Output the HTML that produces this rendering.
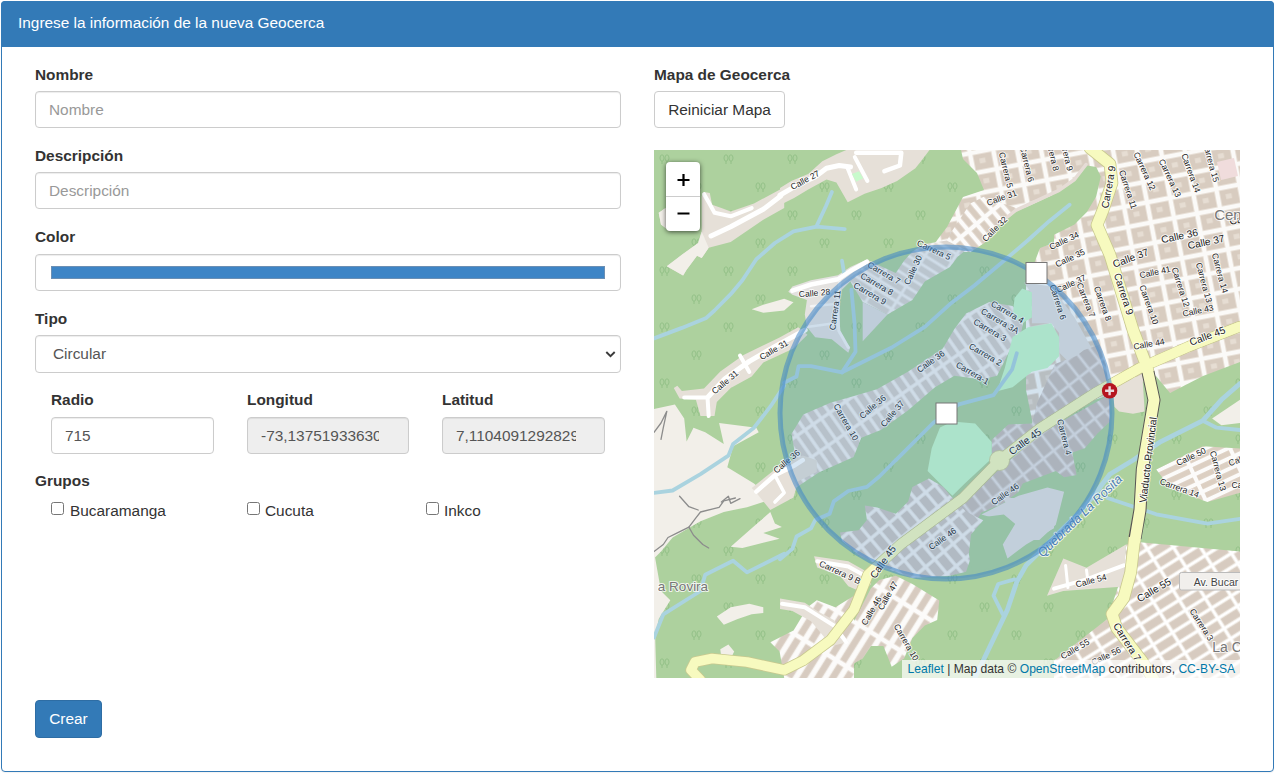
<!DOCTYPE html>
<html><head><meta charset="utf-8">
<style>
*{box-sizing:border-box;margin:0;padding:0}
html,body{width:1276px;height:774px;background:#fff;overflow:hidden}
body{font-family:"Liberation Sans",sans-serif;font-size:15.4px;color:#333;position:relative}
.panel{position:absolute;left:1px;top:1px;width:1273px;height:771px;border:1px solid #337ab7;border-radius:4px;background:#fff;box-shadow:0 1px 1px rgba(0,0,0,.05)}
.head{position:absolute;left:1px;top:1px;width:1273px;height:45.5px;background:#337ab7;border-radius:4px 4px 0 0}
.head span{position:absolute;left:17px;top:11px;line-height:22px;color:#fff;font-size:15.4px;white-space:nowrap}
.lb{position:absolute;font-weight:bold;line-height:22px;white-space:nowrap;color:#333}
.in{position:absolute;height:37px;border:1px solid #ccc;border-radius:4px;background:#fff;box-shadow:inset 0 1px 1px rgba(0,0,0,.075);color:#555;line-height:35px;padding-left:13px;white-space:nowrap;overflow:hidden}
.ph{color:#999}
.dis{background:#eee}
.cb{position:absolute;width:13px;height:13px;border:1px solid #767676;border-radius:2.5px;background:#fff}
.ct{position:absolute;line-height:22px;white-space:nowrap;color:#333}
.btn{position:absolute;border-radius:4px;line-height:22px;text-align:center;white-space:nowrap}
</style></head><body>
<div class="panel"></div>
<div class="head"><span>Ingrese la información de la nueva Geocerca</span></div>

<div class="lb" style="left:35px;top:64px">Nombre</div>
<div class="in ph" style="left:35px;top:91px;width:586px">Nombre</div>
<div class="lb" style="left:35px;top:145px">Descripción</div>
<div class="in ph" style="left:35px;top:172px;width:586px">Descripción</div>
<div class="lb" style="left:35px;top:226px">Color</div>
<div class="in" style="left:35px;top:254px;width:586px"><div style="position:absolute;left:15px;top:11px;width:554px;height:13px;background:#3e85c6;border:1px solid #6b8fb4"></div></div>
<div class="lb" style="left:35px;top:308px">Tipo</div>
<div class="in" style="left:35px;top:335px;width:586px;height:38px;padding-left:17px">Circular
<svg style="position:absolute;right:4.5px;top:14px" width="11" height="9" viewBox="0 0 11 9"><path d="M1.3 2 L5.5 6.2 L9.7 2" fill="none" stroke="#3a3a3a" stroke-width="1.9"/></svg></div>

<div class="lb" style="left:51px;top:389px">Radio</div>
<div class="lb" style="left:247px;top:389px">Longitud</div>
<div class="lb" style="left:442px;top:389px">Latitud</div>
<div class="in" style="left:51px;top:417px;width:163px">715</div>
<div class="in dis" style="left:247px;top:417px;width:162px"><div style="width:118px;overflow:hidden">-73,13751933630</div></div>
<div class="in dis" style="left:442px;top:417px;width:163px"><div style="width:120px;overflow:hidden">7,1104091292829</div></div>

<div class="lb" style="left:35px;top:470px">Grupos</div>
<div class="cb" style="left:51px;top:502px"></div><div class="ct" style="left:70px;top:500px">Bucaramanga</div>
<div class="cb" style="left:247px;top:502px"></div><div class="ct" style="left:265px;top:500px">Cucuta</div>
<div class="cb" style="left:426px;top:502px"></div><div class="ct" style="left:444px;top:500px">Inkco</div>

<div class="btn" style="left:35px;top:700px;width:67px;height:38px;background:#337ab7;border:1px solid #2e6da4;color:#fff;padding-top:7px">Crear</div>

<div class="lb" style="left:654px;top:64px">Mapa de Geocerca</div>
<div class="btn" style="left:654px;top:91px;width:131px;height:37px;background:#fff;border:1px solid #ccc;color:#333;padding-top:7px">Reiniciar Mapa</div>

<div id="map" style="position:absolute;left:654px;top:150px;width:586px;height:528px;background:#add19e;overflow:hidden">
<svg width="586" height="528" viewBox="0 0 586 528" style="position:absolute;left:0;top:0">
<defs>
<pattern id="gridA" width="23.5" height="20.5" patternUnits="userSpaceOnUse" patternTransform="rotate(-11) translate(4,2)"><rect width="23.5" height="20.5" fill="#fbfaf8"/><rect x="2" y="2" width="19.5" height="16.5" fill="#ebe3da"/><rect x="2.8" y="2.8" width="17.9" height="14.9" fill="#d8ccc0"/><rect x="8" y="7" width="6" height="5" fill="#e6ddd3"/></pattern>
<pattern id="gridB" width="10" height="26" patternUnits="userSpaceOnUse" patternTransform="rotate(-35) translate(3,4)"><rect width="10" height="26" fill="#f4f2f0"/><rect x="1.7" y="1.7" width="6.6" height="22.6" fill="#d6d0cb"/></pattern>
<pattern id="gridD" width="26" height="9" patternUnits="userSpaceOnUse" patternTransform="rotate(32)"><rect width="26" height="9" fill="#f4f2f0"/><rect x="1.5" y="1.5" width="23" height="6" fill="#dad5d0"/></pattern>
<pattern id="trees" width="64" height="56" patternUnits="userSpaceOnUse"><g fill="none" stroke="#93c087" stroke-width="1"><path d="M8 14v-3M13 14v-3"/><ellipse cx="8" cy="8" rx="2" ry="3.2"/><ellipse cx="13" cy="8" rx="2" ry="3.2"/><path d="M40 42v-3M45 42v-3"/><ellipse cx="40" cy="36" rx="2" ry="3.2"/><ellipse cx="45" cy="36" rx="2" ry="3.2"/></g></pattern>
<pattern id="gridC" width="12.5" height="42" patternUnits="userSpaceOnUse" patternTransform="rotate(32)"><rect width="12.5" height="42" fill="#fcfbfa"/><rect x="2.6" y="2.2" width="7.3" height="37.6" fill="#e6ddd3"/><rect x="3.3" y="2.9" width="5.9" height="36.2" fill="#d7cbc0"/></pattern>
<pattern id="gridI" width="13" height="21" patternUnits="userSpaceOnUse" patternTransform="rotate(-38)"><rect width="13" height="21" fill="#e6e2e2"/><rect x="1.4" y="1.4" width="10.2" height="18.2" fill="#c9bfba"/></pattern>
<pattern id="gridE" width="44" height="9.5" patternUnits="userSpaceOnUse" patternTransform="rotate(-25)"><rect width="44" height="9.5" fill="#fcfbfa"/><rect x="2" y="2" width="40" height="5.5" fill="#dccfc2"/></pattern>
<pattern id="gridF" width="23" height="12" patternUnits="userSpaceOnUse" patternTransform="rotate(-32)"><rect width="23" height="12" fill="#fff"/><rect x="1.5" y="1.5" width="20" height="9" fill="#e6ddd3"/><rect x="2.3" y="2.3" width="18.4" height="7.4" fill="#d7cbc0"/></pattern>
<pattern id="gridG" width="12" height="19" patternUnits="userSpaceOnUse" patternTransform="rotate(-40)"><rect width="12" height="19" fill="#f4f2f0"/><rect x="1.7" y="1.7" width="8.6" height="15.6" fill="#cfc7c2"/></pattern>
<pattern id="gridH" width="10.5" height="24" patternUnits="userSpaceOnUse" patternTransform="rotate(-40)"><rect width="10.5" height="24" fill="#fcfbfa"/><rect x="2" y="2" width="6.5" height="20" fill="#e6ddd3"/><rect x="2.7" y="2.7" width="5.1" height="18.6" fill="#d8ccc0"/></pattern>
</defs>
<rect width="586" height="528" fill="#add19e"/>
<rect width="586" height="528" fill="url(#trees)"/>
<polygon points="0.0,259.1 20.9,254.4 30.2,268.4 32.6,291.6 39.5,277.7 51.2,282.3 69.8,294.0 65.1,273.0 102.3,277.7 104.7,282.3 79.1,296.3 73.3,317.2 100.0,333.5 116.3,347.4 116.3,349.8 93.0,357.2 69.8,361.9 46.5,371.2 18.6,387.4 7.0,401.4 0.0,408.4" fill="#f2efe9" />
<polygon points="0.0,401.5 7.0,441.0 16.3,450.3 4.7,468.9 1.2,487.5 2.3,528.0 0.0,528.0" fill="#f2efe9" />
<polygon points="76.7,396.8 97.7,378.2 116.3,362.0 120.9,373.6 127.9,377.1 109.3,382.9 125.6,388.7 102.3,394.5 88.4,398.0" fill="#f2efe9" />
<polygon points="62.8,466.6 76.7,457.3 95.3,453.8 109.3,457.3 109.3,463.1 97.7,464.3 83.7,468.9 69.8,474.7" fill="#f2efe9" />
<polygon points="66.3,499.2 74.4,494.5 80.2,501.5 76.7,508.5 67.4,508.5" fill="#f2efe9" />
<polygon points="97.7,159.3 109.3,154.7 130.2,148.8 139.5,152.3 130.2,160.5 109.3,162.8" fill="#f2efe9" />
<polygon points="558.1,268.4 586.0,249.8 586.0,273.0 567.4,275.3" fill="#f2efe9" />
<polygon points="12.8,116.3 29.1,125.6 32.6,119.8 43.0,105.8 47.7,108.1 54.7,97.7 76.7,91.9 109.3,69.8 130.2,58.1 130.2,37.2 100.0,53.5 76.7,61.6 67.4,58.1 58.1,54.7 55.8,43.0 50.0,41.9 47.7,46.5 47.7,81.4 44.2,93.0 27.9,104.7" fill="#e6e0d8" />
<polygon points="4.7,62.8 11.6,58.1 12.8,79.1 7.0,74.4" fill="#e6e0d8" />
<polygon points="12.8,116.3 29.1,125.6 32.6,119.8 43.0,105.8 47.7,108.1 54.7,97.7 47.7,81.4 44.2,93.0 27.9,104.7" fill="#f2efe9" />
<polygon points="4.7,62.8 11.6,58.1 12.8,79.1 7.0,74.4" fill="#f2efe9" />
<polygon points="126.0,38.1 137.3,31.0 154.2,24.0 168.3,11.3 182.4,4.2 192.3,0.0 275.5,0.0 267.0,11.3 261.4,18.3 243.1,31.0 227.6,38.1 210.6,43.7 193.7,52.2 182.4,32.4 172.5,29.6 154.2,39.5 140.1,48.0 126.0,55.0" fill="#e6e0d8" />
<polygon points="307,0 586,0 586,212 549,226 516,243 502,226 470,240 440,250 400,275 380,280 372,240 372,135 386,98 400,93 400,50 377,58 349,77 330,93 316,102 298,102 281,93 293,77 309,47 330,40 323,23 309,9" fill="url(#gridA)" />
<polygon points="563,12 580,8 584,26 567,30" fill="#f0dcdc" />
<polygon points="134.3,141.7 138.4,136.5 157.0,130.3 183.9,125.2 196.3,116.9 212.9,109.6 217.0,112.8 196.3,131.4 186.0,141.7 186.0,185.1 196.3,197.5 194.3,202.7 177.7,189.3 161.2,187.2 152.9,176.9 150.8,164.5 152.9,150.0 138.4,144.8" fill="#e4e2e0" />
<polygon points="196.3,131.4 214.9,110.7 241.8,123.1 250.1,110.7 258.4,101.4 270.8,94.1 296.0,90.0 296.0,81.7 312.1,78.6 313.2,85.9 318.3,93.1 314.2,98.3 303.9,106.5 296.0,116.9 270.8,131.4 258.4,150.0 233.5,164.5 208.7,152.0" fill="url(#gridD)" />
<polygon points="208.7,152.0 233.5,164.5 208.7,191.3" fill="#e0dfdf" />
<polygon points="126.0,322.6 141.5,307.1 137.6,283.8 149.3,264.4 176.4,252.8 203.5,245.0 222.9,239.2 253.9,221.8 288.8,198.5 300.4,179.1 312.0,163.6 335.3,152.0 358.6,155.9 370.2,167.5 366.3,186.9 354.7,202.4 343.1,225.7 327.6,229.5 300.4,225.7 281.0,237.3 253.9,260.5 226.8,279.9 207.4,287.7 199.6,307.1 164.8,322.6 141.5,338.1 126.0,338.1" fill="url(#gridB)" />
<polygon points="370.2,132.6 397.3,136.5 420.6,167.5 440.0,202.4 451.6,233.4 420.6,217.9 405.1,202.4 405.1,183.0 397.3,173.3 377.9,173.3 377.9,144.3" fill="#e4e2e0" />
<polygon points="337.7,308.6 337.7,290 354.3,274.5 378,273.4 383.2,252.8 393.5,230 401,214 422,206 430,200 445,195 452,215 455,241 386,283 346,310" fill="url(#gridI)" />
<polygon points="286,372.7 348,316.9 389.4,281.7 456,244.5 456,271.4 443.2,283.8 430.8,298.3 418.4,302.4 422.5,325.1 410.1,327.2 401.8,321 385.3,327.2 368.7,333.4 364.6,341.7 348,354.1 327.4,362.4 310.8,390 286,390" fill="url(#gridI)" />
<polygon points="364.6,345.8 393.5,337.5 410.1,341.7 406.0,358.2 401.8,374.8 385.3,390.1 354.3,390.1 348.0,370.6 327.4,364.4 348.0,354.1" fill="#e4e2e0" />
<polygon points="186.0,382.4 204.6,380.3 212.9,370.0 210.8,355.5 223.2,357.6 241.8,363.8 254.2,351.4 258.4,336.9 274.9,328.6 289.4,336.9 296.0,345.2 312.1,361.7 332.8,372.0 320.4,396.9 312.1,421.7 296.0,425.8 258.4,427.9 229.4,417.5 204.6,405.1 188.0,390.7" fill="url(#gridG)" />
<polygon points="97.7,338.1 120.9,319.5 139.5,310.2 148.8,305.6 162.8,310.2 162.8,321.9 144.2,331.2 139.5,347.4 116.3,360.0 102.3,342.8" fill="#e6e0d8" />
<polygon points="144.2,177.2 125.6,187.4 89.5,205.1 66.3,221.4 50.0,238.6 27.9,240.9 23.3,235.8 19.8,238.1 25.6,248.6 41.9,249.8 46.5,266.0 60.5,266.0 62.8,252.1 76.7,238.1 97.7,226.5 109.3,212.6 139.5,198.6 153.5,184.7" fill="#e6e0d8" />
<polygon points="160.1,406.2 194.3,411.3 212.9,421.7 217.0,434.1 208.7,442.4 194.3,436.2 186.0,425.8 163.2,417.5" fill="#e6e0d8" />
<polygon points="225.3,430.0 241.8,425.8 258.4,434.1 285.3,450.6 283.2,470.1 270.8,475.5 258.4,487.9 250.1,508.6 237.7,516.8 229.4,496.1 217.0,496.1 208.7,508.6 194.3,516.8 188.0,502.3 200.5,470.1 217.0,438.2" fill="url(#gridC)" />
<polygon points="116.3,492.2 139.5,480.6 153.5,457.3 162.8,450.3 181.4,457.3 200.0,445.7 200.0,528.0 130.2,528.0 125.6,501.5" fill="url(#gridC)" />
<polygon points="126.0,448.6 150.8,452.7 163.2,461.0 179.8,470.1 194.3,492.0 177.7,496.1 157.0,471.3 138.4,461.0 126.0,458.9" fill="#e6e0d8" />
<polygon points="502.3,319.5 516.2,312.6 548.8,296.3 586.0,298.6 586.0,342.8 553.4,352.1 516.2,338.1" fill="url(#gridE)" />
<polygon points="458.1,238.1 488.3,224.2 490.7,261.4 479.0,263.7 465.1,261.4 460.4,256.7" fill="#e6e0d8" />
<polygon points="486.0,392.2 586.0,401.5 586.0,528.0 400.0,528.0 400.0,510.8 432.5,485.2 453.4,468.9 462.7,441.0 469.7,420.1 472.0,394.5" fill="url(#gridF)" />
<polygon points="393.0,445.7 409.3,408.5 432.5,417.8 472.0,394.5 469.7,436.4 409.3,441.0" fill="#e6e0d8" />
<polygon points="317.0,384.4 332.3,366.8 349.9,364.6 363.1,375.6 348.8,393.2 353.2,410.7 319.2,423.9 314.8,404.1" fill="#add19e" />
<polygon points="348.8,348.0 400.0,348.0 400.0,378.2 372.1,394.5 353.5,408.5 348.8,394.5 362.8,371.3" fill="#e4e2e0" />
<polygon points="368.2,138.4 377.9,142.3 377.9,167.5 368.2,173.3 358.6,167.5 360.5,148.1" fill="#c8facc" />
<polygon points="358.6,186.9 374.1,177.2 397.3,173.3 405.1,186.9 405.1,206.3 393.4,217.9 377.9,221.8 358.6,237.3 343.1,241.2 350.8,217.9 354.7,202.4" fill="#c8facc" />
<polygon points="286.0,277.6 298.4,271.4 321.2,273.4 337.7,292.0 337.7,308.6 310.8,333.4 298.4,345.8 286.0,333.4 273.6,321.0 277.7,298.3" fill="#c8facc" />
<polygon points="297.7,81.4 316.3,53.5 330.2,46.5 348.8,53.5 362.8,58.1 348.8,76.7 330.2,93.0 316.3,102.3 302.3,95.3 293.0,90.7" fill="url(#gridH)" />
<polygon points="340,78 346,74.5 361.5,62 381.7,52.7 405,41.9 420.5,31 432.9,15.5 442.2,17 446.8,26.4 442.2,46.5 432.9,62 420.5,74.5 395.6,86.9 384.8,99.3 372.4,111.7 346,120 340,120" fill="#add19e" />
<polyline points="346,73 361.5,60.5 381.7,51.2 405,40.4 420.5,29.5 432,14.5" fill="none" stroke="#e6dcd6" stroke-width="3.5" stroke-linejoin="round" stroke-linecap="round" />
<polyline points="0.0,188.4 27.9,177.9 52.3,167.9 60.5,160.5 76.7,144.2 88.4,130.2 102.3,109.3 120.9,93.0 139.5,81.4 162.8,76.7 190.7,79.1" fill="none" stroke="#aad3df" stroke-width="3.8" stroke-linejoin="round" stroke-linecap="round" />
<polyline points="162.8,75.6 172.1,55.8 177.9,41.9" fill="none" stroke="#aad3df" stroke-width="3.8" stroke-linejoin="round" stroke-linecap="round" />
<polyline points="188.0,110.7 190.1,123.1" fill="none" stroke="#aad3df" stroke-width="3.8" stroke-linejoin="round" stroke-linecap="round" />
<polyline points="197.4,139.6 200.5,172.7 201.5,201.7 188.0,222.4" fill="none" stroke="#aad3df" stroke-width="3.8" stroke-linejoin="round" stroke-linecap="round" />
<polyline points="415.6,54.8 394.9,71.4 374.2,90.0 345.2,114.8 320.4,135.5 296.0,154.1 270.8,176.9 237.7,197.5 208.7,212.0 188.0,222.4 157.0,216.2 144.6,216.2 142.5,226.5 130.1,232.7" fill="none" stroke="#aad3df" stroke-width="3.8" stroke-linejoin="round" stroke-linecap="round" />
<polyline points="130.2,235.8 125.6,242.8 116.3,256.7 100.0,277.7 79.1,294.0 74.4,305.6 46.5,324.2 18.6,340.5 0.0,342.8" fill="none" stroke="#aad3df" stroke-width="3.8" stroke-linejoin="round" stroke-linecap="round" />
<polyline points="362.8,203.3 358.1,219.5 339.5,245.1 304.7,254.4 279.1,273.0 241.9,310.2" fill="none" stroke="#aad3df" stroke-width="3.8" stroke-linejoin="round" stroke-linecap="round" />
<polyline points="241.8,310.0 225.3,326.5 212.9,336.9 194.3,341.0 179.8,351.4 175.6,363.8 161.2,370.0 157.0,378.3 142.5,386.5 138.4,398.9 126.0,409.3" fill="none" stroke="#aad3df" stroke-width="3.8" stroke-linejoin="round" stroke-linecap="round" />
<polyline points="130.2,403.8 93.0,422.4 79.1,410.8 51.2,424.7 46.5,441.0 9.3,464.3 0.0,487.5" fill="none" stroke="#aad3df" stroke-width="3.8" stroke-linejoin="round" stroke-linecap="round" />
<polyline points="586.0,233.5 567.4,249.8 548.8,270.7 506.9,291.6 479.0,310.2 455.8,324.2 441.8,342.8 427.9,360.0" fill="none" stroke="#aad3df" stroke-width="4.8" stroke-linejoin="round" stroke-linecap="round" />
<polyline points="427.9,360.1 409.3,378.2 386.0,401.5 372.1,415.4 362.8,431.7 353.5,459.6 330.2,508.5 320.9,528.0" fill="none" stroke="#aad3df" stroke-width="4.8" stroke-linejoin="round" stroke-linecap="round" />
<polyline points="360.5,429.4 344.2,434.0 339.5,445.7 348.8,464.3" fill="none" stroke="#aad3df" stroke-width="3.8" stroke-linejoin="round" stroke-linecap="round" />
<polyline points="453.4,348.0 502.3,364.3 553.4,373.6 586.0,368.9" fill="none" stroke="#aad3df" stroke-width="3.8" stroke-linejoin="round" stroke-linecap="round" />
<polyline points="548.8,270.7 562.7,277.7 586.0,280.0" fill="none" stroke="#aad3df" stroke-width="3.8" stroke-linejoin="round" stroke-linecap="round" />
<polyline points="57.0,86.0 76.7,76.7 109.3,59.3 126.7,46.0" fill="none" stroke="#fff" stroke-width="5" stroke-linejoin="round" stroke-linecap="round" />
<polyline points="126.0,45.1 142.9,35.3 161.3,26.8 172.5,18.3 185.2,15.5 196.5,16.9" fill="none" stroke="#fff" stroke-width="5" stroke-linejoin="round" stroke-linecap="round" />
<polyline points="193.7,18.3 202.2,39.5" fill="none" stroke="#fff" stroke-width="4" stroke-linejoin="round" stroke-linecap="round" />
<polyline points="200.8,7.1 213.4,31.0" fill="none" stroke="#fff" stroke-width="4" stroke-linejoin="round" stroke-linecap="round" />
<polyline points="202.2,2.8 247.3,2.8 245.9,15.5 230.4,21.2" fill="none" stroke="#fff" stroke-width="4.5" stroke-linejoin="round" stroke-linecap="round" />
<polygon points="197.9,24.0 205.0,21.2 209.2,28.2 202.2,31.7" fill="#c8facc" />
<polyline points="50.0,44.2 54.7,52.3 60.5,62.8 76.7,66.3 97.7,58.1" fill="none" stroke="#fff" stroke-width="4" stroke-linejoin="round" stroke-linecap="round" />
<polyline points="151.2,180.0 123.3,195.1 95.3,211.4 70.9,228.8 54.7,246.3" fill="none" stroke="#fff" stroke-width="5" stroke-linejoin="round" stroke-linecap="round" />
<polyline points="30.2,247.4 53.5,247.4 54.7,266.0" fill="none" stroke="#fff" stroke-width="4" stroke-linejoin="round" stroke-linecap="round" />
<polyline points="86.0,205.6 95.3,221.9" fill="none" stroke="#fff" stroke-width="4" stroke-linejoin="round" stroke-linecap="round" />
<polyline points="138.4,140.7 157.0,134.5 183.9,129.3 196.3,121.0 212.9,111.7" fill="none" stroke="#fff" stroke-width="4.5" stroke-linejoin="round" stroke-linecap="round" />
<polyline points="186.0,131.4 182.9,158.3 184.9,181.0 194.3,197.5" fill="none" stroke="#f4f4f4" stroke-width="3" stroke-linejoin="round" stroke-linecap="round" />
<polyline points="157.0,156.2 181.8,154.1" fill="none" stroke="#f4f4f4" stroke-width="2.5" stroke-linejoin="round" stroke-linecap="round" />
<polyline points="152.9,176.9 183.9,172.7" fill="none" stroke="#f4f4f4" stroke-width="2.5" stroke-linejoin="round" stroke-linecap="round" />
<polyline points="102.3,341.6 120.9,325.3 139.5,316.0 148.8,310.2" fill="none" stroke="#fff" stroke-width="4.5" stroke-linejoin="round" stroke-linecap="round" />
<polyline points="120.9,325.3 130.2,342.8 120.9,352.1" fill="none" stroke="#fff" stroke-width="3.5" stroke-linejoin="round" stroke-linecap="round" />
<polyline points="163.2,411.3 194.3,416.5 214.9,427.9" fill="none" stroke="#fff" stroke-width="4" stroke-linejoin="round" stroke-linecap="round" />
<polyline points="128.1,453.7 150.8,457.3 163.2,465.1 179.8,475.5 192.2,492.0" fill="none" stroke="#fff" stroke-width="4" stroke-linejoin="round" stroke-linecap="round" />
<polyline points="400.0,438.7 432.5,429.4 469.7,415.4" fill="none" stroke="#fff" stroke-width="4" stroke-linejoin="round" stroke-linecap="round" />
<polyline points="411.6,415.4 413.9,437.5" fill="none" stroke="#fff" stroke-width="3" stroke-linejoin="round" stroke-linecap="round" />
<polyline points="432.5,420.1 433.7,429.4" fill="none" stroke="#fff" stroke-width="3" stroke-linejoin="round" stroke-linecap="round" />
<polyline points="586,176.5 534.8,196.5 486,218 441.8,242.8 386,278.5 345.5,310.5 309,348 246.5,394.5 214,424.7 200,459.6 176.7,489.9 148.8,510.8 130.2,520 93,512 58,508.5 41,512 37,520 46.5,530" fill="none" stroke="#c9c98f" stroke-width="11.2" stroke-linejoin="round" stroke-linecap="round" />
<polyline points="586,176.5 534.8,196.5 486,218 441.8,242.8 386,278.5 345.5,310.5 309,348 246.5,394.5 214,424.7 200,459.6 176.7,489.9 148.8,510.8 130.2,520 93,512 58,508.5 41,512 37,520 46.5,530" fill="none" stroke="#f7fabf" stroke-width="9.6" stroke-linejoin="round" stroke-linecap="round" />
<circle cx="345.5" cy="310.5" r="10" fill="#f7fabf" stroke="#c9c98f" stroke-width="0.8"/>
<polyline points="441.8,242.8 386,278.5 345.5,310.5 309,348 246.5,394.5 214,424.7" fill="none" stroke="#f7fabf" stroke-width="9.4" stroke-linejoin="round" stroke-linecap="round" />
<polyline points="436,-2 456,14 458,33 449,60 443,75 456,105 479,180 493,217 500,250 488.3,319.5 486,360 481,385 476.7,422.4 469.7,448 458,464 462.7,478 488,511 500,530" fill="none" stroke="#c9c98f" stroke-width="12.6" stroke-linejoin="round" stroke-linecap="round" />
<polyline points="436,-2 456,14 458,33 449,60 443,75 456,105 479,180 493,217 500,250 488.3,319.5 486,360 481,385 476.7,422.4 469.7,448 458,464 462.7,478 488,511 500,530" fill="none" stroke="#f7fabf" stroke-width="11" stroke-linejoin="round" stroke-linecap="round" />
<polyline points="494,222 500,250 488.3,319.5 486,360 481,388" fill="none" stroke="#555" stroke-width="13" stroke-linejoin="round"/>
<polyline points="494,222 500,250 488.3,319.5 486,360 481,390" fill="none" stroke="#f7fabf" stroke-width="11" stroke-linejoin="round" stroke-linecap="round" />
<polyline points="586,176.5 534.8,196.5 486,218 441.8,242.8" fill="none" stroke="#f7fabf" stroke-width="9.4" stroke-linejoin="round" stroke-linecap="round" />
<polyline points="0.0,401.5 9.3,394.5 14.0,387.5 23.3,382.9 34.9,377.1 41.9,367.8 46.5,362.0 65.1,357.3 69.8,350.8 81.4,348.0" fill="none" stroke="#8c8c8c" stroke-width="1.3" stroke-linejoin="round" stroke-linecap="round" />
<polyline points="34.9,377.1 39.5,385.2 48.8,394.5 54.7,398.0" fill="none" stroke="#8c8c8c" stroke-width="1.3" stroke-linejoin="round" stroke-linecap="round" />
<polyline points="0.0,282.3 7.0,273.0 12.8,261.4 9.3,277.7 7.0,289.3" fill="none" stroke="#8c8c8c" stroke-width="1.3" stroke-linejoin="round" stroke-linecap="round" />
<polyline points="25.6,346.3 34.9,356.7 44.2,360.0" fill="none" stroke="#8c8c8c" stroke-width="1.3" stroke-linejoin="round" stroke-linecap="round" />
<polyline points="67.4,352.1 74.4,346.3 76.7,353.3 86.0,348.6" fill="none" stroke="#8c8c8c" stroke-width="1.3" stroke-linejoin="round" stroke-linecap="round" />
<text x="151" y="30" transform="rotate(-28 151 30)" font-size="8.6" fill="#222" text-anchor="middle" dominant-baseline="central" stroke="#fff" stroke-width="2" stroke-opacity="0.8" paint-order="stroke" stroke-linejoin="round" >Calle 27</text>
<text x="160.5" y="143" transform="rotate(-5 160.5 143)" font-size="8.6" fill="#222" text-anchor="middle" dominant-baseline="central" stroke="#fff" stroke-width="2" stroke-opacity="0.8" paint-order="stroke" stroke-linejoin="round" >Calle 28</text>
<text x="181" y="160" transform="rotate(-82 181 160)" font-size="8.6" fill="#222" text-anchor="middle" dominant-baseline="central" stroke="#fff" stroke-width="2" stroke-opacity="0.8" paint-order="stroke" stroke-linejoin="round" >Carrera 11</text>
<text x="347.7" y="47.7" transform="rotate(-20 347.7 47.7)" font-size="8.6" fill="#222" text-anchor="middle" dominant-baseline="central" stroke="#fff" stroke-width="2" stroke-opacity="0.8" paint-order="stroke" stroke-linejoin="round" >Calle 31</text>
<text x="340.7" y="79" transform="rotate(-45 340.7 79)" font-size="8.6" fill="#222" text-anchor="middle" dominant-baseline="central" stroke="#fff" stroke-width="2" stroke-opacity="0.8" paint-order="stroke" stroke-linejoin="round" >Calle 32</text>
<text x="352" y="20" transform="rotate(76 352 20)" font-size="8.6" fill="#222" text-anchor="middle" dominant-baseline="central" stroke="#fff" stroke-width="2" stroke-opacity="0.8" paint-order="stroke" stroke-linejoin="round" >Carrera 5</text>
<text x="373" y="14" transform="rotate(76 373 14)" font-size="8.6" fill="#222" text-anchor="middle" dominant-baseline="central" stroke="#fff" stroke-width="2" stroke-opacity="0.8" paint-order="stroke" stroke-linejoin="round" >Carrera 6</text>
<text x="280" y="100" transform="rotate(25 280 100)" font-size="8.6" fill="#222" text-anchor="middle" dominant-baseline="central" stroke="#fff" stroke-width="2" stroke-opacity="0.8" paint-order="stroke" stroke-linejoin="round" >Carrera 5</text>
<text x="259" y="120" transform="rotate(-65 259 120)" font-size="8.6" fill="#222" text-anchor="middle" dominant-baseline="central" stroke="#fff" stroke-width="2" stroke-opacity="0.8" paint-order="stroke" stroke-linejoin="round" >Calle 30</text>
<text x="230" y="123" transform="rotate(30 230 123)" font-size="8.6" fill="#222" text-anchor="middle" dominant-baseline="central" stroke="#fff" stroke-width="2" stroke-opacity="0.8" paint-order="stroke" stroke-linejoin="round" >Carrera 7</text>
<text x="223" y="134" transform="rotate(30 223 134)" font-size="8.6" fill="#222" text-anchor="middle" dominant-baseline="central" stroke="#fff" stroke-width="2" stroke-opacity="0.8" paint-order="stroke" stroke-linejoin="round" >Carrera 8</text>
<text x="216" y="143.5" transform="rotate(30 216 143.5)" font-size="8.6" fill="#222" text-anchor="middle" dominant-baseline="central" stroke="#fff" stroke-width="2" stroke-opacity="0.8" paint-order="stroke" stroke-linejoin="round" >Carrera 9</text>
<text x="353.5" y="162" transform="rotate(30 353.5 162)" font-size="8.6" fill="#222" text-anchor="middle" dominant-baseline="central" stroke="#fff" stroke-width="2" stroke-opacity="0.8" paint-order="stroke" stroke-linejoin="round" >Carrera 4</text>
<text x="346" y="171" transform="rotate(30 346 171)" font-size="8.6" fill="#222" text-anchor="middle" dominant-baseline="central" stroke="#fff" stroke-width="2" stroke-opacity="0.8" paint-order="stroke" stroke-linejoin="round" >Carrera 3A</text>
<text x="336" y="180" transform="rotate(30 336 180)" font-size="8.6" fill="#222" text-anchor="middle" dominant-baseline="central" stroke="#fff" stroke-width="2" stroke-opacity="0.8" paint-order="stroke" stroke-linejoin="round" >Carrera 3</text>
<text x="474" y="39.5" transform="rotate(72 474 39.5)" font-size="8.6" fill="#222" text-anchor="middle" dominant-baseline="central" stroke="#fff" stroke-width="2" stroke-opacity="0.8" paint-order="stroke" stroke-linejoin="round" >Carrera 11</text>
<text x="490.6" y="21" transform="rotate(65 490.6 21)" font-size="8.6" fill="#222" text-anchor="middle" dominant-baseline="central" stroke="#fff" stroke-width="2" stroke-opacity="0.8" paint-order="stroke" stroke-linejoin="round" >Carrera 12</text>
<text x="516" y="28" transform="rotate(65 516 28)" font-size="8.6" fill="#222" text-anchor="middle" dominant-baseline="central" stroke="#fff" stroke-width="2" stroke-opacity="0.8" paint-order="stroke" stroke-linejoin="round" >Carrera 13</text>
<text x="537" y="23" transform="rotate(70 537 23)" font-size="8.6" fill="#222" text-anchor="middle" dominant-baseline="central" stroke="#fff" stroke-width="2" stroke-opacity="0.8" paint-order="stroke" stroke-linejoin="round" >Carrera 14</text>
<text x="557" y="12" transform="rotate(75 557 12)" font-size="8.6" fill="#222" text-anchor="middle" dominant-baseline="central" stroke="#fff" stroke-width="2" stroke-opacity="0.8" paint-order="stroke" stroke-linejoin="round" >Carrera 15</text>
<text x="410" y="90.7" transform="rotate(-25 410 90.7)" font-size="8.6" fill="#222" text-anchor="middle" dominant-baseline="central" stroke="#fff" stroke-width="2" stroke-opacity="0.8" paint-order="stroke" stroke-linejoin="round" >Calle 34</text>
<text x="416" y="108" transform="rotate(-25 416 108)" font-size="8.6" fill="#222" text-anchor="middle" dominant-baseline="central" stroke="#fff" stroke-width="2" stroke-opacity="0.8" paint-order="stroke" stroke-linejoin="round" >Calle 35</text>
<text x="417" y="133.7" transform="rotate(-25 417 133.7)" font-size="8.6" fill="#222" text-anchor="middle" dominant-baseline="central" stroke="#fff" stroke-width="2" stroke-opacity="0.8" paint-order="stroke" stroke-linejoin="round" >Calle 37</text>
<text x="501" y="122" transform="rotate(-12 501 122)" font-size="8.6" fill="#222" text-anchor="middle" dominant-baseline="central" stroke="#fff" stroke-width="2" stroke-opacity="0.8" paint-order="stroke" stroke-linejoin="round" >Calle 41</text>
<text x="495" y="154.6" transform="rotate(70 495 154.6)" font-size="8.6" fill="#222" text-anchor="middle" dominant-baseline="central" stroke="#fff" stroke-width="2" stroke-opacity="0.8" paint-order="stroke" stroke-linejoin="round" >Carrera 10</text>
<text x="526.7" y="137" transform="rotate(72 526.7 137)" font-size="8.6" fill="#222" text-anchor="middle" dominant-baseline="central" stroke="#fff" stroke-width="2" stroke-opacity="0.8" paint-order="stroke" stroke-linejoin="round" >Carrera 12</text>
<text x="550" y="132.5" transform="rotate(75 550 132.5)" font-size="8.6" fill="#222" text-anchor="middle" dominant-baseline="central" stroke="#fff" stroke-width="2" stroke-opacity="0.8" paint-order="stroke" stroke-linejoin="round" >Carrera 13</text>
<text x="566" y="123" transform="rotate(75 566 123)" font-size="8.6" fill="#222" text-anchor="middle" dominant-baseline="central" stroke="#fff" stroke-width="2" stroke-opacity="0.8" paint-order="stroke" stroke-linejoin="round" >Carrera 14</text>
<text x="544" y="160.5" transform="rotate(-12 544 160.5)" font-size="8.6" fill="#222" text-anchor="middle" dominant-baseline="central" stroke="#fff" stroke-width="2" stroke-opacity="0.8" paint-order="stroke" stroke-linejoin="round" >Calle 43</text>
<text x="448.8" y="153.5" transform="rotate(70 448.8 153.5)" font-size="8.6" fill="#222" text-anchor="middle" dominant-baseline="central" stroke="#fff" stroke-width="2" stroke-opacity="0.8" paint-order="stroke" stroke-linejoin="round" >Carrera 8</text>
<text x="432" y="150" transform="rotate(68 432 150)" font-size="8.6" fill="#222" text-anchor="middle" dominant-baseline="central" stroke="#fff" stroke-width="2" stroke-opacity="0.8" paint-order="stroke" stroke-linejoin="round" >Carrera 7</text>
<text x="404" y="152" transform="rotate(72 404 152)" font-size="8.6" fill="#222" text-anchor="middle" dominant-baseline="central" stroke="#fff" stroke-width="2" stroke-opacity="0.8" paint-order="stroke" stroke-linejoin="round" >Carrera 6</text>
<text x="398" y="3" transform="rotate(76 398 3)" font-size="8.6" fill="#222" text-anchor="middle" dominant-baseline="central" stroke="#fff" stroke-width="2" stroke-opacity="0.8" paint-order="stroke" stroke-linejoin="round" >Carrera 8</text>
<text x="412" y="3" transform="rotate(76 412 3)" font-size="8.6" fill="#222" text-anchor="middle" dominant-baseline="central" stroke="#fff" stroke-width="2" stroke-opacity="0.8" paint-order="stroke" stroke-linejoin="round" >Carrera 9</text>
<text x="495" y="194" transform="rotate(-10 495 194)" font-size="8.6" fill="#222" text-anchor="middle" dominant-baseline="central" stroke="#fff" stroke-width="2" stroke-opacity="0.8" paint-order="stroke" stroke-linejoin="round" >Calle 44</text>
<text x="410.4" y="287" transform="rotate(76 410.4 287)" font-size="8.6" fill="#222" text-anchor="middle" dominant-baseline="central" stroke="#fff" stroke-width="2" stroke-opacity="0.8" paint-order="stroke" stroke-linejoin="round" >Carrera 4</text>
<text x="537" y="306.7" transform="rotate(-25 537 306.7)" font-size="8.6" fill="#222" text-anchor="middle" dominant-baseline="central" stroke="#fff" stroke-width="2" stroke-opacity="0.8" paint-order="stroke" stroke-linejoin="round" >Calle 50</text>
<text x="525.5" y="338" transform="rotate(20 525.5 338)" font-size="8.6" fill="#222" text-anchor="middle" dominant-baseline="central" stroke="#fff" stroke-width="2" stroke-opacity="0.8" paint-order="stroke" stroke-linejoin="round" >Carrera 14</text>
<text x="564" y="320.7" transform="rotate(75 564 320.7)" font-size="8.6" fill="#222" text-anchor="middle" dominant-baseline="central" stroke="#fff" stroke-width="2" stroke-opacity="0.8" paint-order="stroke" stroke-linejoin="round" >Carrera 13</text>
<text x="276.7" y="211.4" transform="rotate(-35 276.7 211.4)" font-size="8.6" fill="#222" text-anchor="middle" dominant-baseline="central" stroke="#fff" stroke-width="2" stroke-opacity="0.8" paint-order="stroke" stroke-linejoin="round" >Calle 36</text>
<text x="331.4" y="204.4" transform="rotate(30 331.4 204.4)" font-size="8.6" fill="#222" text-anchor="middle" dominant-baseline="central" stroke="#fff" stroke-width="2" stroke-opacity="0.8" paint-order="stroke" stroke-linejoin="round" >Carrera 2</text>
<text x="318.6" y="223" transform="rotate(30 318.6 223)" font-size="8.6" fill="#222" text-anchor="middle" dominant-baseline="central" stroke="#fff" stroke-width="2" stroke-opacity="0.8" paint-order="stroke" stroke-linejoin="round" >Carrera-1</text>
<text x="218.6" y="256.7" transform="rotate(-40 218.6 256.7)" font-size="8.6" fill="#222" text-anchor="middle" dominant-baseline="central" stroke="#fff" stroke-width="2" stroke-opacity="0.8" paint-order="stroke" stroke-linejoin="round" >Calle 36</text>
<text x="238.4" y="263.7" transform="rotate(-50 238.4 263.7)" font-size="8.6" fill="#222" text-anchor="middle" dominant-baseline="central" stroke="#fff" stroke-width="2" stroke-opacity="0.8" paint-order="stroke" stroke-linejoin="round" >Calle 37</text>
<text x="351" y="344" transform="rotate(-35 351 344)" font-size="8.6" fill="#222" text-anchor="middle" dominant-baseline="central" stroke="#fff" stroke-width="2" stroke-opacity="0.8" paint-order="stroke" stroke-linejoin="round" >Calle 46</text>
<text x="192" y="272" transform="rotate(60 192 272)" font-size="8.6" fill="#222" text-anchor="middle" dominant-baseline="central" stroke="#fff" stroke-width="2" stroke-opacity="0.8" paint-order="stroke" stroke-linejoin="round" >Carrera 10</text>
<text x="119.8" y="199.8" transform="rotate(-30 119.8 199.8)" font-size="8.6" fill="#222" text-anchor="middle" dominant-baseline="central" stroke="#fff" stroke-width="2" stroke-opacity="0.8" paint-order="stroke" stroke-linejoin="round" >Calle 31</text>
<text x="71" y="232" transform="rotate(-40 71 232)" font-size="8.6" fill="#222" text-anchor="middle" dominant-baseline="central" stroke="#fff" stroke-width="2" stroke-opacity="0.8" paint-order="stroke" stroke-linejoin="round" >Calle 31</text>
<text x="132.6" y="311.4" transform="rotate(-40 132.6 311.4)" font-size="8.6" fill="#222" text-anchor="middle" dominant-baseline="central" stroke="#fff" stroke-width="2" stroke-opacity="0.8" paint-order="stroke" stroke-linejoin="round" >Calle 36</text>
<text x="186" y="422.4" transform="rotate(25 186 422.4)" font-size="8.6" fill="#222" text-anchor="middle" dominant-baseline="central" stroke="#fff" stroke-width="2" stroke-opacity="0.8" paint-order="stroke" stroke-linejoin="round" >Carrera 9 B</text>
<text x="288.4" y="388.7" transform="rotate(-35 288.4 388.7)" font-size="8.6" fill="#222" text-anchor="middle" dominant-baseline="central" stroke="#fff" stroke-width="2" stroke-opacity="0.8" paint-order="stroke" stroke-linejoin="round" >Calle 46</text>
<text x="217.4" y="460.8" transform="rotate(-60 217.4 460.8)" font-size="8.6" fill="#222" text-anchor="middle" dominant-baseline="central" stroke="#fff" stroke-width="2" stroke-opacity="0.8" paint-order="stroke" stroke-linejoin="round" >Calle 46</text>
<text x="233.7" y="445.7" transform="rotate(-60 233.7 445.7)" font-size="8.6" fill="#222" text-anchor="middle" dominant-baseline="central" stroke="#fff" stroke-width="2" stroke-opacity="0.8" paint-order="stroke" stroke-linejoin="round" >Calle 47</text>
<text x="252.3" y="492.2" transform="rotate(60 252.3 492.2)" font-size="8.6" fill="#222" text-anchor="middle" dominant-baseline="central" stroke="#fff" stroke-width="2" stroke-opacity="0.8" paint-order="stroke" stroke-linejoin="round" >Carrera 10</text>
<text x="437" y="430.6" transform="rotate(-15 437 430.6)" font-size="8.6" fill="#222" text-anchor="middle" dominant-baseline="central" stroke="#fff" stroke-width="2" stroke-opacity="0.8" paint-order="stroke" stroke-linejoin="round" >Calle 54</text>
<text x="547.6" y="474.7" transform="rotate(57 547.6 474.7)" font-size="8.6" fill="#222" text-anchor="middle" dominant-baseline="central" stroke="#fff" stroke-width="2" stroke-opacity="0.8" paint-order="stroke" stroke-linejoin="round" >Carrera 3</text>
<text x="421" y="499" transform="rotate(-30 421 499)" font-size="8.6" fill="#222" text-anchor="middle" dominant-baseline="central" stroke="#fff" stroke-width="2" stroke-opacity="0.8" paint-order="stroke" stroke-linejoin="round" >Calle 55</text>
<text x="452" y="506" transform="rotate(-25 452 506)" font-size="8.6" fill="#222" text-anchor="middle" dominant-baseline="central" stroke="#fff" stroke-width="2" stroke-opacity="0.8" paint-order="stroke" stroke-linejoin="round" >Calle 56</text>
<text x="584" y="310" transform="rotate(-20 584 310)" font-size="8.6" fill="#222" text-anchor="middle" dominant-baseline="central" stroke="#fff" stroke-width="2" stroke-opacity="0.8" paint-order="stroke" stroke-linejoin="round" >Calle</text>
<text x="583" y="335" transform="rotate(0 583 335)" font-size="8.6" fill="#222" text-anchor="middle" dominant-baseline="central" stroke="#fff" stroke-width="2" stroke-opacity="0.8" paint-order="stroke" stroke-linejoin="round" >Ca</text>
<text x="454.6" y="37" transform="rotate(-80 454.6 37)" font-size="10.2" fill="#222" text-anchor="middle" dominant-baseline="central" stroke="#fff" stroke-width="2" stroke-opacity="0.8" paint-order="stroke" stroke-linejoin="round" >Carrera 9</text>
<text x="525.5" y="86" transform="rotate(-12 525.5 86)" font-size="10.2" fill="#222" text-anchor="middle" dominant-baseline="central" stroke="#fff" stroke-width="2" stroke-opacity="0.8" paint-order="stroke" stroke-linejoin="round" >Calle 36</text>
<text x="552" y="92" transform="rotate(-12 552 92)" font-size="10.2" fill="#222" text-anchor="middle" dominant-baseline="central" stroke="#fff" stroke-width="2" stroke-opacity="0.8" paint-order="stroke" stroke-linejoin="round" >Calle 37</text>
<text x="476.7" y="108" transform="rotate(-20 476.7 108)" font-size="10.2" fill="#222" text-anchor="middle" dominant-baseline="central" stroke="#fff" stroke-width="2" stroke-opacity="0.8" paint-order="stroke" stroke-linejoin="round" >Calle 37</text>
<text x="469.7" y="144" transform="rotate(72 469.7 144)" font-size="10.2" fill="#222" text-anchor="middle" dominant-baseline="central" stroke="#fff" stroke-width="2" stroke-opacity="0.8" paint-order="stroke" stroke-linejoin="round" >Carrera 9</text>
<text x="553.4" y="186" transform="rotate(-20 553.4 186)" font-size="10.2" fill="#222" text-anchor="middle" dominant-baseline="central" stroke="#fff" stroke-width="2" stroke-opacity="0.8" paint-order="stroke" stroke-linejoin="round" >Calle 45</text>
<text x="494" y="310" transform="rotate(-83 494 310)" font-size="10.2" fill="#222" text-anchor="middle" dominant-baseline="central" stroke="#fff" stroke-width="2" stroke-opacity="0.8" paint-order="stroke" stroke-linejoin="round" >Viaducto Provincial</text>
<text x="371" y="291.6" transform="rotate(-36 371 291.6)" font-size="10.2" fill="#222" text-anchor="middle" dominant-baseline="central" stroke="#fff" stroke-width="2" stroke-opacity="0.8" paint-order="stroke" stroke-linejoin="round" >Calle 45</text>
<text x="229" y="412" transform="rotate(-55 229 412)" font-size="10.2" fill="#222" text-anchor="middle" dominant-baseline="central" stroke="#fff" stroke-width="2" stroke-opacity="0.8" paint-order="stroke" stroke-linejoin="round" >Calle 45</text>
<text x="500" y="440" transform="rotate(-30 500 440)" font-size="10.2" fill="#222" text-anchor="middle" dominant-baseline="central" stroke="#fff" stroke-width="2" stroke-opacity="0.8" paint-order="stroke" stroke-linejoin="round" >Calle 55</text>
<text x="473" y="492" transform="rotate(58 473 492)" font-size="10.2" fill="#222" text-anchor="middle" dominant-baseline="central" stroke="#fff" stroke-width="2" stroke-opacity="0.8" paint-order="stroke" stroke-linejoin="round" >Carrera 7</text>
<text x="583" y="70" transform="rotate(-12 583 70)" font-size="10.2" fill="#222" text-anchor="middle" dominant-baseline="central" stroke="#fff" stroke-width="2" stroke-opacity="0.8" paint-order="stroke" stroke-linejoin="round" >Cal</text>
<text x="29" y="436.4" transform="rotate(0 29 436.4)" font-size="13.5" fill="#777" text-anchor="middle" dominant-baseline="central" stroke="#fff" stroke-width="2" stroke-opacity="0.8" paint-order="stroke" stroke-linejoin="round" >a Rovira</text>
<text x="576" y="64" transform="rotate(0 576 64)" font-size="15" fill="#777" text-anchor="middle" dominant-baseline="central" stroke="#fff" stroke-width="2" stroke-opacity="0.8" paint-order="stroke" stroke-linejoin="round" >Cent</text>
<text x="573" y="497" transform="rotate(0 573 497)" font-size="14" fill="#777" text-anchor="middle" dominant-baseline="central" stroke="#fff" stroke-width="2" stroke-opacity="0.8" paint-order="stroke" stroke-linejoin="round" >La C</text>
<text x="426" y="366" transform="rotate(-44 426 366)" font-size="12.5" fill="#4d80b3" text-anchor="middle" dominant-baseline="central" stroke="#fff" stroke-width="2" stroke-opacity="0.8" paint-order="stroke" stroke-linejoin="round" font-style="italic">Quebrada La Rosita</text>
<rect x="525.5" y="422.5" width="66" height="17.5" rx="2" fill="#f1efec" stroke="#bbb" stroke-width="1"/>
<text x="562" y="431.5" transform="rotate(0 562 431.5)" font-size="10.5" fill="#444" text-anchor="middle" dominant-baseline="central" stroke="#fff" stroke-width="2" stroke-opacity="0.8" paint-order="stroke" stroke-linejoin="round" >Av. Bucar</text>
<circle cx="292" cy="263" r="166" fill="#3e85c6" fill-opacity="0.2" stroke="#3e85c6" stroke-opacity="0.55" stroke-width="5"/>
<rect x="282" y="253" width="21" height="21" fill="#fff" stroke="#777" stroke-width="1"/>
<rect x="372" y="112.5" width="21" height="21" fill="#fff" stroke="#777" stroke-width="1"/>
<circle cx="455.6" cy="240.8" r="7.7" fill="#b5151f"/><path d="M455.6 236.3v9M451.1 240.8h9" stroke="#e9d9dc" stroke-width="2.4" fill="none"/>
</svg>
<div style="position:absolute;left:12px;top:12px;width:34px;height:69px;background:#fff;border-radius:4px;box-shadow:0 1px 5px rgba(0,0,0,.65)">
<div style="position:absolute;left:0;top:34px;width:34px;height:1px;background:#ccc"></div>
<svg style="position:absolute;left:0;top:0" width="34" height="69"><path d="M11.5 18h12M17.5 12v12M11.5 51.5h12" stroke="#000" stroke-width="2.2" fill="none"/></svg>
</div>
<div style="position:absolute;right:0;bottom:0;height:18px;width:338px;background:rgba(255,255,255,.7);font-size:12.1px;line-height:18px;color:#333;white-space:nowrap;padding-left:5.5px"><span style="color:#0078a8">Leaflet</span> | Map data © <span style="color:#0078a8">OpenStreetMap</span> contributors, <span style="color:#0078a8">CC-BY-SA</span></div>
</div>
</body></html>
